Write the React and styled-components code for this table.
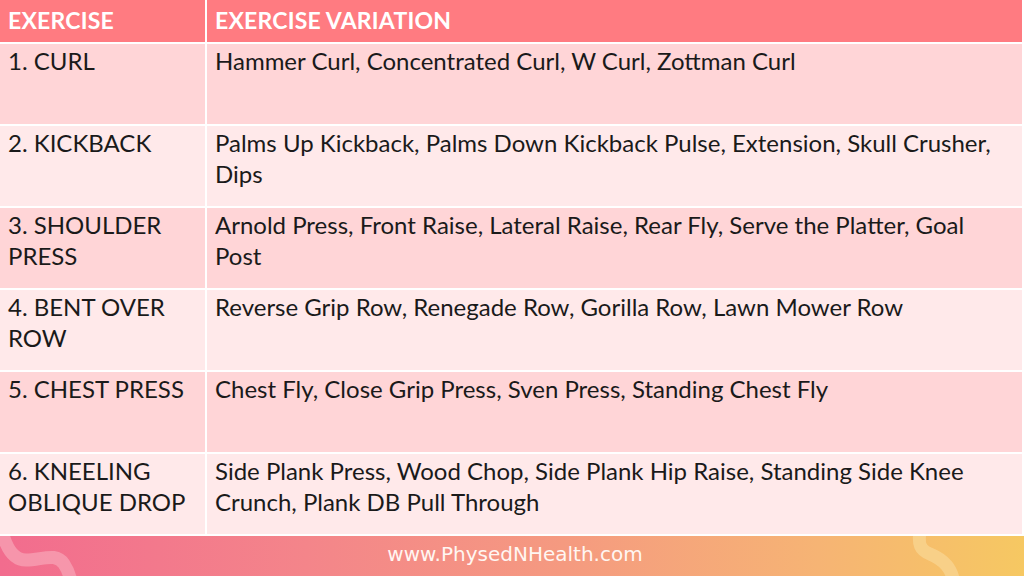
import React from 'react';
import styled, { createGlobalStyle } from 'styled-components';

const rows = [
  ['1. CURL', 'Hammer Curl, Concentrated Curl, W Curl, Zottman Curl'],
  ['2. KICKBACK', 'Palms Up Kickback, Palms Down Kickback Pulse, Extension, Skull Crusher, Dips'],
  ['3. SHOULDER PRESS', 'Arnold Press, Front Raise, Lateral Raise, Rear Fly, Serve the Platter, Goal Post'],
  ['4. BENT OVER ROW', 'Reverse Grip Row, Renegade Row, Gorilla Row, Lawn Mower Row'],
  ['5. CHEST PRESS', 'Chest Fly, Close Grip Press, Sven Press, Standing Chest Fly'],
  ['6. KNEELING OBLIQUE DROP', 'Side Plank Press, Wood Chop, Side Plank Hip Raise, Standing Side Knee Crunch, Plank DB Pull Through'],
];

const App = () => {
  return (
    <>
      <GlobalStyle />
      <Page>
        <Table>
          <HeadCell>EXERCISE</HeadCell>
          <HeadCell>EXERCISE VARIATION</HeadCell>
          {rows.map(([name, variations], i) => (
            <React.Fragment key={name}>
              <Cell shade={i % 2 === 0}>{name}</Cell>
              <Cell shade={i % 2 === 0}>{variations}</Cell>
            </React.Fragment>
          ))}
        </Table>

        {/* Footer band */}
        <Footer>
          <Swirl viewBox="0 0 90 40" width="90" height="40">
            <path d="M4 2 C8 14, 14 24, 26 24 C42 24, 56 16, 64 28 C68 34, 70 40, 71 46" fill="none" stroke="#f79cb0" strokeOpacity="0.85" strokeWidth="13" strokeLinecap="round" />
          </Swirl>
          <Site>www.PhysedNHealth.com</Site>
          <SwirlRight viewBox="0 0 80 40" width="80" height="40">
            <path d="M20 -4 C18 8, 20 14, 30 18 C44 24, 52 32, 54 48" fill="none" stroke="#f8d18c" strokeOpacity="0.9" strokeWidth="13" strokeLinecap="round" />
          </SwirlRight>
        </Footer>
      </Page>
    </>
  );
};

const GlobalStyle = createGlobalStyle`
  html, body {
    margin: 0;
    padding: 0;
    background: #ffffff;
  }
  body {
    font-family: 'Lato', 'Noto Sans', sans-serif;
  }
`;

const Page = styled.div`
  width: 1024px;
  height: 576px;
  display: flex;
  flex-direction: column;
  overflow: hidden;
  background: #ffffff;
`;

const Table = styled.div`
  display: grid;
  grid-template-columns: 205px 1fr;
  grid-template-rows: 42px repeat(6, 80px);
  gap: 2px;
  width: 1022px;
  padding-bottom: 2px;
`;

const HeadCell = styled.div`
  background: #ff7b81;
  color: #ffffff;
  font-weight: 700;
  font-size: 23px;
  line-height: 40px;
  padding: 0 8px;
  letter-spacing: 0.2px;
`;

const Cell = styled.div`
  background: ${(p) => (p.shade ? '#ffd5d7' : '#ffe9ea')};
  color: #1a1a1a;
  font-size: 24px;
  line-height: 31px;
  padding: 1px 8px 0;
`;

const Footer = styled.div`
  position: relative;
  flex: 1;
  display: flex;
  align-items: center;
  justify-content: center;
  background: linear-gradient(90deg, #f26c8e 0%, #f4858a 30%, #f59a80 55%, #f6b474 80%, #f6c862 100%);
  overflow: hidden;
`;

const Site = styled.div`
  color: #fff6f2;
  font-family: 'DejaVu Sans', sans-serif;
  font-size: 20px;
  margin-left: 6px;
  margin-top: -4px;
`;

const Swirl = styled.svg`
  position: absolute;
  left: 0;
  top: 0;
`;

const SwirlRight = styled.svg`
  position: absolute;
  left: 900px;
  top: 0;
`;

export default App;
